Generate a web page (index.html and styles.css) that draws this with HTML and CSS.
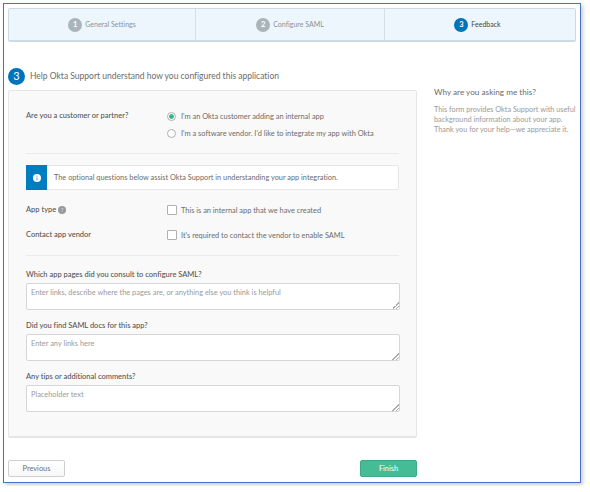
FILE: index.html
```
<!DOCTYPE html>
<html lang="en">
<head>
  <meta charset="UTF-8" />
  <meta name="viewport" content="width=device-width, initial-scale=1.0"/>
  <title>Feedback | Create SAML Integration</title>
  <link rel="stylesheet" href="styles.css">
</head>
<body>

  <div class="window">

    <nav class="steps">
      <div class="step"><span class="num">1</span><span class="step-name">General Settings</span></div>
      <div class="step"><span class="num">2</span><span class="step-name">Configure SAML</span></div>
      <div class="step active"><span class="num">3</span><span class="step-name">Feedback</span></div>
    </nav>

    <div class="heading">
      <span class="num big">3</span>
      <h2>Help Okta Support understand how you configured this application</h2>
    </div>

    <div class="content">
      <form class="main">
        <div class="panel">

          <div class="row">
            <span class="label">Are you a customer or partner?</span>
            <div class="options">
              <label class="option"><input type="radio" name="kind" checked /><span>I'm an Okta customer adding an internal app</span></label>
              <label class="option"><input type="radio" name="kind" /><span>I'm a software vendor. I'd like to integrate my app with Okta</span></label>
            </div>
          </div>

          <div class="info">
            <div class="info-icon">
              <svg width="8" height="8" viewBox="0 0 8 8">
                <circle cx="4" cy="4" r="4" fill="#fff"/>
                <path d="M4 1.7v1M4 3.5v2.8" stroke="#4da3d4" stroke-width="1"/>
              </svg>
            </div>
            <p>The optional questions below assist Okta Support in understanding your app integration.</p>
          </div>

          <div class="row app-type">
            <span class="label">App type <span class="help">?</span></span>
            <label class="option"><input type="checkbox" /><span>This is an internal app that we have created</span></label>
          </div>
          <div class="row contact">
            <span class="label">Contact app vendor</span>
            <label class="option"><input type="checkbox" /><span>It's required to contact the vendor to enable SAML</span></label>
          </div>

          <div class="field">
            <label class="label" for="pages">Which app pages did you consult to configure SAML?</label>
            <textarea id="pages" placeholder="Enter links, describe where the pages are, or anything else you think is helpful"></textarea>
          </div>
          <div class="field">
            <label class="label" for="docs">Did you find SAML docs for this app?</label>
            <textarea id="docs" placeholder="Enter any links here"></textarea>
          </div>
          <div class="field">
            <label class="label" for="tips">Any tips or additional comments?</label>
            <textarea id="tips" placeholder="Placeholder text"></textarea>
          </div>

        </div>

        <div class="buttons">
          <button type="button">Previous</button>
          <button type="button" class="btn-finish">Finish</button>
        </div>
      </form>

      <aside>
        <h3>Why are you asking me this?</h3>
        <p>This form provides Okta Support with useful<br>background information about your app.<br>Thank you for your help—we appreciate it.</p>
      </aside>
    </div>

  </div>

</body>
</html>
```
FILE: styles.css
```
:root {
  --blue: #0074bb;
  --green: #46bc96;
  --text: #6c6c6c;
  --label: #555;
  --muted: #9a9a9a;
  --line: #e6e6e6;
}

* { box-sizing: border-box; }

body {
  margin: 0;
  padding: 3px;
  background: #fff;
  color: var(--text);
  font-family: Lato, "Open Sans", sans-serif;
  font-size: 7.4px;
  font-variant-ligatures: none;
  line-height: 10px;
  overflow: hidden;
}

h2, h3, p {
  margin: 0;
  font-weight: 400;
}

.window {
  width: 578px;
  height: 480px;
  padding: 4px;
  border: 1px solid #4472c4;
  background: #fff;
  box-shadow: 2px 2px 4px rgba(0,0,0,0.2);
}

.steps {
  display: grid;
  grid-template-columns: 186px 189px 1fr;
  width: 568px;
  height: 34px;
  border: 1px solid #ccdbe3;
  border-bottom-width: 2px;
  border-radius: 2px;
  background: #edf6fd;
  font-size: 7px;
}

.step {
  display: flex;
  align-items: center;
  justify-content: center;
  gap: 3px;
  color: #8a9298;
}

.step + .step {
  border-left: 1px solid #d3e0e7;
}

.step-name { padding-bottom: 2px; }

.num {
  display: flex;
  align-items: center;
  justify-content: center;
  width: 14px;
  height: 14px;
  border-radius: 50%;
  background: #a9b4bb;
  color: #fff;
  font-size: 7.5px;
  font-weight: 700;
}

.active {
  padding-right: 5px;
  color: #444;
}

.active .num { background: var(--blue); }

.heading {
  display: flex;
  align-items: center;
  gap: 5px;
  height: 18px;
  margin-top: 25px;
}

.num.big {
  width: 17px;
  height: 17px;
  background: var(--blue);
  font-size: 11px;
  font-weight: 400;
}

h2 {
  font-size: 8.5px;
}

.content {
  display: flex;
  gap: 17px;
  margin-top: 5px;
}

.main { width: 409px; }

.panel {
  height: 348px;
  padding: 18px 17px 0;
  border: 1px solid var(--line);
  border-bottom-width: 2px;
  border-radius: 2px;
  background: #f9f9f9;
}

.row {
  display: flex;
  height: 45px;
  border-bottom: 1px solid #ebebeb;
}

.label {
  width: 141px;
  margin-top: 2px;
  color: var(--label);
  font-size: 7.5px;
  font-weight: 500;
}

.option {
  display: flex;
  align-items: center;
  gap: 4px;
  height: 14px;
}

.option input + span { padding-top: 1px; }

.options .option {
  gap: 5px;
  height: 17px;
}

.options { margin-top: -1px; }

input {
  appearance: none;
  width: 10px;
  height: 10px;
  margin: 0;
  border: 1px solid #b0b0b0;
  border-radius: 1px;
  background: #fff;
}

input[type="radio"] {
  width: 9px;
  height: 9px;
  border-radius: 50%;
}

input[type="radio"]:checked {
  background: radial-gradient(circle, #2fb98a 0 2px, #fff 2.6px);
}

.info {
  display: flex;
  height: 25px;
  margin: 11px 0 13px;
  border: 1px solid var(--line);
  border-radius: 2px;
  background: #fff;
}

.info-icon {
  display: flex;
  align-items: center;
  justify-content: center;
  width: 21px;
  margin: -1px 0 -1px -1px;
  background: #007dc1;
}

.info p {
  padding: 7px 0 0 7px;
  font-size: 7.35px;
}

.app-type {
  height: 25px;
  border: none;
}

.contact { height: 28px; }

.help {
  display: inline-flex;
  align-items: center;
  justify-content: center;
  width: 8px;
  height: 8px;
  border-radius: 50%;
  background: #999;
  color: #ddd;
  font-size: 6px;
  line-height: 8px;
}

.field {
  height: 51px;
  padding-top: 14px;
}

.field .label {
  display: block;
  width: auto;
  margin: 0 0 3px;
}

textarea {
  display: block;
  width: 374px;
  height: 27px;
  padding: 4px 4px 0;
  border: 1px solid #d6d6d6;
  border-radius: 2px;
  background: #fff;
  font: inherit;
  overflow: hidden;
}

textarea::placeholder { color: var(--muted); }

textarea::-webkit-resizer {
  background: linear-gradient(135deg, transparent 50%, #aaa 50% 60%, transparent 60% 75%, #aaa 75% 85%, transparent 85%) right bottom / 7px 7px no-repeat;
}

.buttons {
  display: flex;
  justify-content: space-between;
  margin-top: 22px;
}

button {
  width: 57px;
  height: 17px;
  padding: 0;
  border: 1px solid #cfcfcf;
  border-radius: 2px;
  background: linear-gradient(#fff, #f8f8f8);
  color: #707070;
  font: inherit;
}

.btn-finish {
  border-color: #3fa886;
  background: var(--green);
  color: #fff;
}

h3 {
  margin: -3px 0 8px;
  font-size: 8.2px;
}

aside p {
  color: var(--muted);
  font-size: 7.3px;
  white-space: nowrap;
}
```
